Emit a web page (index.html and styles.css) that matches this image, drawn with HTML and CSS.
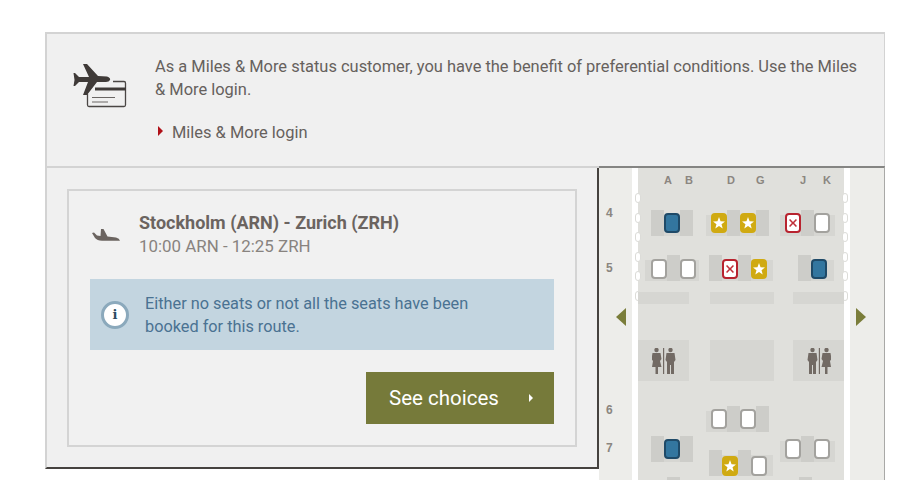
FILE: index.html
```html
<!DOCTYPE html>
<html lang="en">
<head>
  <meta charset="UTF-8" />
  <meta name="viewport" content="width=device-width, initial-scale=1.0"/>
  <title>Seat reservation</title>
  <link rel="stylesheet" href="styles.css">
</head>
<body>
  <div class="page">
    <div class="notice">
      <svg class="notice-icon" viewBox="72 62 56 46" width="56" height="46">
        <path d="M83 63 L87 63 L98 75 L107 75.500 Q111 77 110 79 Q109 81 106 81 L97 81 L87 94 L83 94 L88 81 L79 81 L75 85 L73.500 85 L74.500 79 L73.500 72 L75 72 L79 76 L89 76 Z" fill="#3f3a38"/>
        <path d="M113 80.500 H124 Q125.500 80.500 125.500 82 V104 Q125.500 105.500 124 105.500 H89 Q87.500 105.500 87.500 104 V93" fill="none" stroke="#4a4644" stroke-width="1.300"/>
        <path d="M95 88 H126" stroke="#3f3a38" stroke-width="3"/>
        <path d="M92 96.500 H115 M92 101 H108" stroke="#6a6664" stroke-width="1.200"/>
      </svg>
      <div class="notice-text">
        <p>As a Miles &amp; More status customer, you have the benefit of preferential conditions. Use the Miles &amp; More login.</p>
        <a class="notice-link" href="#">Miles &amp; More login</a>
      </div>
    </div>

    <div class="booking">
      <div class="flight-panel">
        <div class="flight-card">
          <div class="route">
            <svg class="route-icon" viewBox="0 0 28 14" width="28" height="14">
              <path d="M0 4 L2 3.500 L5 6.500 L8.500 7 L9 0 L11.500 0 L15.500 7.500 L24 8.500 Q27.500 9.500 28 11.800 L10 11.800 Q5 11.500 3 9 Z" fill="#6b6460"/>
            </svg>
            <div>
              <h3>Stockholm (ARN) - Zurich (ZRH)</h3>
              <div class="route-times">10:00 ARN - 12:25 ZRH</div>
            </div>
          </div>
          <div class="info-box">
            <span class="info-icon">i</span>
            <p>Either no seats or not all the seats have been<br>booked for this route.</p>
          </div>
          <div class="actions">
            <button class="choices-btn">See choices <span class="btn-arrow"></span></button>
          </div>
        </div>
      </div>

      <div class="seatmap">
        <div class="cabin"></div>
        <div class="wall wall-left"><i></i><i></i><i></i><i></i><i></i><i></i></div>
        <div class="wall wall-right"><i></i><i></i><i></i><i></i><i></i><i></i></div>

        <span class="col col-a">A</span><span class="col col-b">B</span>
        <span class="col col-d">D</span><span class="col col-g">G</span>
        <span class="col col-j">J</span><span class="col col-k">K</span>

        <span class="row-no row-4">4</span>
        <span class="row-no row-5">5</span>
        <span class="row-no row-6">6</span>
        <span class="row-no row-7">7</span>

        <div class="arrow arrow-left"></div>
        <div class="arrow arrow-right"></div>

        <div class="unit u4ab"><b class="back"></b><span class="seat free-blue"></span><b class="back"></b></div>
        <div class="unit u4dg"><span class="seat star"></span><b class="back"></b><span class="seat star"></span><b class="back"></b></div>
        <div class="unit u4jk"><span class="seat taken"></span><b class="back"></b><span class="seat"></span></div>

        <div class="unit drop u5ab"><span class="seat"></span><b class="back"></b><span class="seat"></span></div>
        <div class="unit drop u5dg"><b class="back"></b><span class="seat taken"></span><b class="back"></b><span class="seat star"></span></div>
        <div class="unit drop u5j"><b class="back"></b><span class="seat free-blue"></span></div>

        <div class="block bar bar-a"></div>
        <div class="block bar bar-d"></div>
        <div class="block bar bar-j"></div>

        <div class="block lav lav-a">
          <svg viewBox="0 0 24 26" width="24" height="26"><use href="#wc"/></svg>
        </div>
        <div class="block lav lav-d"></div>
        <div class="block lav lav-j">
          <svg class="wc-flip" viewBox="0 0 24 26" width="24" height="26">
            <defs>
              <g id="wc" fill="#726a64">
                <circle cx="4.500" cy="2" r="2.200"/>
                <path d="M.5 5 H8.500 L9.500 11 L8 13 L9.500 19 H6 V26 H3.500 V19 H0 L1 13 L-.5 11 Z"/>
                <rect x="11" y="0" width="1.200" height="26"/>
                <circle cx="18.500" cy="2" r="2.200"/>
                <path d="M14.500 5 H22.500 L23.500 12 L22 14 V26 H19 V17 H18 V26 H15 V14 L13.500 12 Z"/>
              </g>
            </defs>
            <use href="#wc"/>
          </svg>
        </div>

        <div class="unit u6dg"><span class="seat"></span><b class="back"></b><span class="seat"></span><b class="back"></b></div>
        <div class="unit u7ab"><b class="back"></b><span class="seat free-blue"></span><b class="back"></b></div>
        <div class="unit u7jk"><span class="seat"></span><b class="back"></b><span class="seat"></span></div>
        <div class="unit drop-more u7dg"><b class="back"></b><span class="seat star"></span><b class="back"></b><span class="seat"></span></div>
        <b class="back stub stub-a"></b>
        <b class="back stub stub-j"></b>
      </div>
    </div>
  </div>
</body>
</html>
```

FILE: styles.css
```css
* {
  margin: 0;
  padding: 0;
  box-sizing: border-box;
}

body {
  background: #fff;
  font-family: 'Roboto', sans-serif;
  font-size: 16px;
  line-height: 23px;
  color: #66615d;
  height: 480px;
  overflow: hidden;
}

.page {
  width: 840px;
  margin: 32px 0 0 45px;
}

/* status notice */
.notice {
  display: flex;
  height: 136px;
  padding: 21px 25px 0 25px;
  gap: 27px;
  font-size: 16.45px;
  background: #f0f0f0;
  border: 2px solid #d3d3d3;
  border-right-width: 1px;
}

.notice-icon {
  flex: none;
  margin-top: 8px;
}

.notice-link {
  position: relative;
  display: block;
  margin-top: 20px;
  padding-left: 17px;
  color: #66615d;
  text-decoration: none;
}

.notice-link::before {
  content: "";
  position: absolute;
  left: 3px;
  top: 5px;
  border-left: 5px solid #b01018;
  border-top: 5px solid transparent;
  border-bottom: 5px solid transparent;
}

/* booking area */
.booking {
  display: flex;
  align-items: flex-start;
}

.flight-panel {
  flex: none;
  width: 554px;
  height: 301px;
  padding: 21px 20px 0;
  background: #f0f0f0;
  border-left: 2px solid #d3d3d3;
  border-right: 2px solid #45423f;
  border-bottom: 2px solid #45423f;
}

.flight-card {
  width: 510px;
  height: 258px;
  padding: 20px 21px;
  border: 2px solid #d4d4d4;
  background: #f1f1f1;
}

.route {
  display: flex;
  align-items: center;
  gap: 19px;
  padding-left: 2px;
  font-size: 16.9px;
  color: #88837f;
}

.route-icon {
  flex: none;
  margin-top: 2px;
}

.route h3 {
  font-size: 18px;
  line-height: 24px;
  font-weight: 700;
  color: #6b6460;
}

.info-box {
  display: flex;
  align-items: center;
  gap: 16px;
  height: 71px;
  margin-top: 21px;
  padding-left: 11px;
  font-size: 16.3px;
  background: #c3d5e0;
  color: #4a7292;
}

.info-icon {
  flex: none;
  width: 28px;
  height: 28px;
  border-radius: 50%;
  border: 3px solid #8ba9bc;
  background: #fff;
  color: #2c4a60;
  font-family: 'DejaVu Serif', serif;
  font-size: 13px;
  font-weight: 700;
  line-height: 22px;
  text-align: center;
}

.actions {
  display: flex;
  justify-content: flex-end;
  margin-top: 22px;
}

.choices-btn {
  display: flex;
  align-items: center;
  justify-content: space-between;
  width: 188px;
  height: 52px;
  padding: 0 21px 0 23px;
  border: none;
  background: #767a3a;
  color: #fff;
  font-family: 'Roboto', sans-serif;
  font-size: 20.5px;
}

.btn-arrow {
  border-left: 4px solid #fff;
  border-top: 4px solid transparent;
  border-bottom: 4px solid transparent;
}

/* seat map, items sit at their place on the plan */
.seatmap {
  position: relative;
  flex: none;
  width: 286px;
  height: 314px;
  margin-top: -2px;
  background: #ededea;
  border-top: 2px solid #858583;
  border-right: 1px solid #a9a9a7;
}

.cabin {
  position: absolute;
  left: 33px;
  top: 0;
  bottom: 0;
  width: 218px;
  background: #e0e0dc;
  border-left: 6px solid #fff;
  border-right: 6px solid #fff;
}

.wall {
  position: absolute;
  top: 25px;
  display: flex;
  flex-direction: column;
  gap: 9.6px;
}

.wall i {
  display: block;
  width: 6px;
  height: 10px;
  background: #fff;
  border: 1px solid #dcdcd8;
  border-radius: 3px;
}

.wall-left { left: 36px; }
.wall-right { left: 243px; }

.col,
.row-no {
  position: absolute;
  font-family: 'Liberation Sans', sans-serif;
  font-weight: 700;
  color: #8b8680;
}

.col {
  top: 6px;
  font-size: 11px;
  line-height: 12px;
}

.col-a { left: 65px; }
.col-b { left: 86px; }
.col-d { left: 128px; }
.col-g { left: 157px; }
.col-j { left: 201px; }
.col-k { left: 224px; }

.row-no {
  left: 7px;
  font-size: 12px;
  line-height: 12px;
}

.row-4 { top: 39px; }
.row-5 { top: 94px; }
.row-6 { top: 236px; }
.row-7 { top: 274px; }

.arrow {
  position: absolute;
  top: 140px;
  border-top: 9px solid transparent;
  border-bottom: 9px solid transparent;
}

.arrow-left {
  left: 17px;
  border-right: 10px solid #7a7d3a;
}

.arrow-right {
  left: 257px;
  border-left: 10px solid #7a7d3a;
}

.unit {
  position: absolute;
  display: flex;
  height: 26px;
  background: linear-gradient(#d6d6d2, #d6d6d2) 0 5px / 100% 21px no-repeat;
}

.back {
  display: block;
  flex: none;
  width: 13px;
  background: #cdcdc9;
}

.seat {
  position: relative;
  flex: none;
  width: 16px;
  height: 20px;
  margin-top: 3px;
  background: #fff;
  border: 2px solid #a3a29e;
  border-radius: 4px;
}

.drop .seat { margin-top: 4px; }
.drop-more .seat { margin-top: 6px; }

.free-blue {
  background: #33769f;
  border-color: #1f4a68;
}

.star {
  background: #d0aa12;
  border-color: #d0aa12;
}

.star::before {
  content: "";
  position: absolute;
  left: 0;
  top: 2px;
  width: 12px;
  height: 12px;
  background: #fff;
  clip-path: polygon(50% 0, 63% 35%, 100% 38%, 71% 60%, 81% 96%, 50% 76%, 19% 96%, 29% 60%, 0 38%, 37% 35%);
}

.taken {
  border-color: #b8232f;
}

.taken::before {
  content: "";
  position: absolute;
  left: 2px;
  top: 4px;
  width: 8px;
  height: 8px;
  background: #c0303a;
  clip-path: polygon(14% 0, 50% 36%, 86% 0, 100% 14%, 64% 50%, 100% 86%, 86% 100%, 50% 64%, 14% 100%, 0 86%, 36% 50%, 0 14%);
}

.u4ab { left: 52px; top: 42px; }
.u4dg { left: 107px; top: 42px; padding-left: 5px; }
.u4jk { left: 181px; top: 42px; padding: 0 5px; }
.u5ab { left: 46px; top: 87px; padding: 0 3px 0 6px; }
.u5dg { left: 110px; top: 87px; padding-right: 6px; }
.u5j { left: 199px; top: 87px; padding-right: 7px; }
.u6dg { left: 107px; top: 238px; padding-left: 5px; }
.u7ab { left: 52px; top: 268px; }
.u7jk { left: 181px; top: 268px; padding: 0 5px; }
.u7dg { left: 110px; top: 282px; padding-right: 6px; }

.stub {
  position: absolute;
  top: 309px;
  height: 5px;
}

.stub-a { left: 68px; }
.stub-j { left: 200px; }

.block {
  position: absolute;
  background: #d6d6d2;
}

.bar {
  top: 124px;
  height: 12px;
}

.lav {
  top: 172px;
  height: 41px;
  display: flex;
  align-items: center;
  justify-content: center;
}

.bar-a, .lav-a { left: 39px; width: 51px; }
.bar-d, .lav-d { left: 111px; width: 64px; }
.bar-j, .lav-j { left: 194px; width: 51px; }

.wc-flip { transform: scaleX(-1); }
```
